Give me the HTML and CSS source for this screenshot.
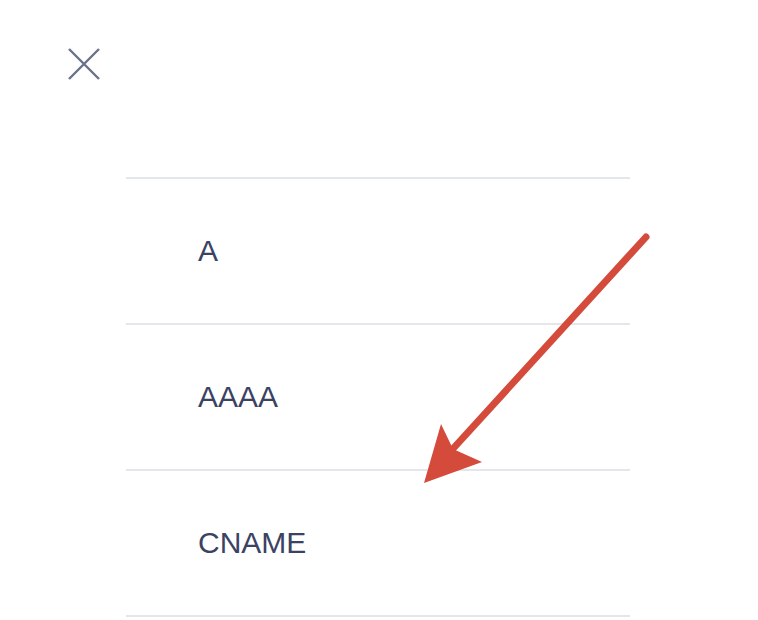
FILE: index.html
```html
<!DOCTYPE html>
<html lang="en">
<head>
    <meta charset="UTF-8">
    <meta name="viewport" content="width=device-width, initial-scale=1.0">
    <title>Record type</title>
    <link rel="stylesheet" href="styles.css">
</head>
<body>
    <div class="page">
        <button class="close" aria-label="Close">
            <svg width="32" height="32" viewBox="0 0 32 32">
                <path d="M1 1 L31 31 M31 1 L1 31" stroke="#6b7188" stroke-width="2.4" fill="none"/>
            </svg>
        </button>

        <ul class="types">
            <li class="type">A</li>
            <li class="type">AAAA</li>
            <li class="type">CNAME</li>
        </ul>

        <!-- annotation arrow -->
        <svg class="arrow" width="758" height="620" viewBox="0 0 758 620">
            <line x1="646" y1="237" x2="450" y2="452" stroke="#d44b3c" stroke-width="7" stroke-linecap="round"/>
            <polygon points="424,483 441,424 453,449 482,462" fill="#d44b3c"/>
        </svg>
    </div>
</body>
</html>
```

FILE: styles.css
```css
body {
    margin: 0;
    background-color: #fff;
    font-family: "Liberation Sans", Arial, sans-serif;
}
.page {
    position: relative;
    width: 758px;
    height: 620px;
    overflow: hidden;
}
.close {
    display: block;
    margin: 48px 0 0 68px;
    padding: 0;
    width: 32px;
    height: 32px;
    border: none;
    background: none;
    cursor: pointer;
}
.close svg {
    display: block;
}
.types {
    list-style: none;
    margin: 97px 0 0 126px;
    padding: 0;
    width: 504px;
    border-bottom: 2px solid #e3e6ea;
}
.type {
    display: flex;
    align-items: center;
    height: 144px;
    padding-left: 72px;
    border-top: 2px solid #e3e6ea;
    font-size: 30px;
    line-height: 1;
    color: #3b4262;
}
.arrow {
    position: absolute;
    left: 0;
    top: 0;
    pointer-events: none;
}
```
